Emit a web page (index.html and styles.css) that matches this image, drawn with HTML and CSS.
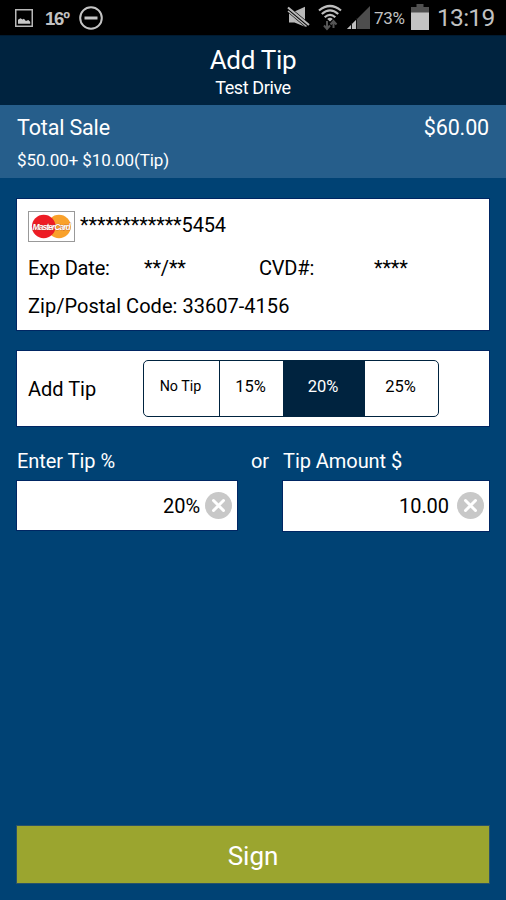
FILE: index.html
```html
<!DOCTYPE html>
<html lang="en">
<head>
<meta charset="utf-8">
<title>Add Tip</title>
<link rel="stylesheet" href="styles.css">
</head>
<body>
<div class="status">
  <svg class="status-picture" width="18" height="18" viewBox="0 0 18 18"><rect x=".75" y=".75" width="16.5" height="16.5" fill="none" stroke="#b8b8b8" stroke-width="1.5"/><path d="M3 14.800v-4l2.500-1.500 2 1.300 1.400-.8 2 2.300 2.400-1 1.900 1.700v2z" fill="#c8c8c8"/></svg>
  <span class="status-temp">16º</span>
  <svg class="status-block" width="24" height="24" viewBox="0 0 24 24"><circle cx="12" cy="12" r="10.8" fill="none" stroke="#c4c4c4" stroke-width="2"/><path d="M5.5 12h13" stroke="#c4c4c4" stroke-width="3"/></svg>
  <svg class="status-mute" width="24" height="22" viewBox="0 0 24 22"><path d="M2 5.500h5.500L18 .8v20L7.500 16.500H2z" fill="#b8b8b8"/><path d="M0 2.200l22 18.500" stroke="#000" stroke-width="5.500"/><path d="M1 1.500l21 17.500" stroke="#b8b8b8" stroke-width="2.200"/><path d="M1 5l18.500 15.500" stroke="#b8b8b8" stroke-width="1.500"/></svg>
  <svg class="status-wifi" width="24" height="27" viewBox="0 0 24 27"><g fill="none" stroke="#bdbdbd" stroke-width="2.200"><path d="M1 6.500Q12-2.500 23 6.500M3.800 10Q12 2.800 20.200 10M6.700 13.300Q12 8.300 17.300 13.300"/></g><path d="M9.200 15Q12 12.500 14.800 15L12 17.500z" fill="#bdbdbd"/><path d="M9 17v8M6 21.500L9 25l3-3.500M15.500 24v-7M12.500 20.500l3-3.500 3 3.500" fill="none" stroke="#555" stroke-width="2"/></svg>
  <svg class="status-signal" width="23" height="23" viewBox="0 0 23 23"><path d="M0 23L23 0v23z" fill="#4d4d4d"/><path d="M0 23l9-9v9z" fill="#bdbdbd"/><path d="M4.500 17v6M9.500 12v11" stroke="#111" stroke-width="1"/></svg>
  <span class="status-percent">73%</span>
  <svg class="status-battery" width="18" height="26" viewBox="0 0 18 26"><path d="M5.500 0h7v3H18v6H0V3h5.500z" fill="#505050"/><path d="M0 8.500h18V26H0z" fill="#c4c4c4"/></svg>
  <span class="status-clock">13:19</span>
</div>
<header class="header">
  <h1 class="title"><span>Add Tip</span></h1>
  <p class="subtitle"><span>Test Drive</span></p>
</header>
<section class="total">
  <div class="total-row"><span class="total-label">Total Sale</span><span class="total-value">$60.00</span></div>
  <p class="total-detail"><span>$50.00+ $10.00(Tip)</span></p>
</section>
<main class="content">
  <section class="panel card">
    <div class="card-number">
      <svg class="card-logo" width="47" height="31" viewBox="0 0 47 31"><rect x=".5" y=".5" width="46" height="30" fill="#fff" stroke="#999"/><circle cx="31" cy="15.500" r="11.800" fill="#f9a12b"/><circle cx="15.700" cy="15.500" r="11.800" fill="#ed1c24"/><text x="4.500" y="18.500" class="logo-text">MasterCard</text></svg>
      <span class="digits">************5454</span>
    </div>
    <div class="card-details"><span>Exp Date:</span><span>**/**</span><span>CVD#:</span><span>****</span></div>
    <div class="zip"><span>Zip/Postal Code: 33607-4156</span></div>
  </section>
  <section class="panel tip">
    <span class="tip-label">Add Tip</span>
    <div class="segments"><span class="segment small">No Tip</span><span class="segment">15%</span><span class="segment active">20%</span><span class="segment">25%</span></div>
  </section>
  <section class="entry">
    <span>Enter Tip %</span><span>or</span><span>Tip Amount $</span>
    <div class="field percent"><span>20%</span><svg width="27" height="27" viewBox="0 0 27 27"><circle cx="13.500" cy="13.500" r="13.500" fill="#c8c8c8"/><path d="M8.500 8.500l10 10M18.500 8.500l-10 10" stroke="#fff" stroke-width="3" stroke-linecap="round"/></svg></div>
    <div class="field amount"><span>10.00</span><svg width="27" height="27" viewBox="0 0 27 27"><circle cx="13.500" cy="13.500" r="13.500" fill="#c8c8c8"/><path d="M8.500 8.500l10 10M18.500 8.500l-10 10" stroke="#fff" stroke-width="3" stroke-linecap="round"/></svg></div>
  </section>
  <button class="sign"><span>Sign</span></button>
</main>
</body>
</html>
```
FILE: styles.css
```css
* { box-sizing: border-box; margin: 0; padding: 0; }
body { width: 506px; height: 900px; display: flex; flex-direction: column; background: #004274; color: #fff; font-family: Roboto, sans-serif; overflow: hidden; white-space: nowrap; }
svg { display: block; flex: none; }
.status { height: 36px; display: flex; align-items: flex-start; background: #000; color: #c2c2c2; border-bottom: 1px solid #001a30; flex: none; }
.status-picture { margin: 9px 0 0 15px; }
.status-temp { width: 34px; margin: 1px 0 0 12px; font: 700 18.500px/36px "Liberation Sans", sans-serif; letter-spacing: -1.200px; }
.status-block { margin-top: 6px; }
.status-mute { margin: 6px 0 0 184px; }
.status-wifi { margin: 4px 0 0 7px; }
.status-signal { margin: 6px 0 0 5px; }
.status-percent { width: 41px; padding-left: 4px; font-size: 17px; line-height: 36px; letter-spacing: -.3px; }
.status-battery { margin: 4px 0 0 0; }
.status-clock { margin-left: 8px; font-size: 24.500px; line-height: 35px; letter-spacing: -.7px; }
.header { height: 69px; padding-top: 9px; background: #00233f; text-align: center; flex: none; }
.title { font-size: 26px; font-weight: 400; line-height: 30px; letter-spacing: -.3px; }
.subtitle { margin-top: 1px; font-size: 18px; line-height: 24px; letter-spacing: -.4px; }
.total { height: 73px; padding: 8px 17px 0; background: #265e8b; flex: none; }
.total-row { display: flex; justify-content: space-between; font-size: 21.500px; line-height: 30px; letter-spacing: -.15px; }
.total-detail { margin-top: 5px; font-size: 17px; line-height: 24px; letter-spacing: -.1px; }
.content { flex: 1; display: flex; flex-direction: column; padding: 21px 17px 17px; }
.panel { background: #fff; color: #000; box-shadow: 0 0 0 1px #002663; flex: none; }
.card { height: 131px; padding: 12px 11px; font-size: 20px; }
.card-number { display: flex; height: 31px; }
.logo-text { font: italic 700 8.500px "Liberation Sans", sans-serif; letter-spacing: -.950px; fill: #fff; stroke: #a8452b; stroke-width: .5px; paint-order: stroke; }
.digits { margin-left: 5px; line-height: 29px; letter-spacing: -.15px; }
.card-details { display: grid; grid-template-columns: 116px 115px 115px auto; height: 32px; margin-top: 10px; line-height: 32px; letter-spacing: -.2px; }
.zip { margin-top: 6px; line-height: 32px; letter-spacing: .03px; }
.tip { height: 75px; margin-top: 21px; padding: 9px 0 0 11px; display: flex; font-size: 20px; }
.tip-label { width: 115px; line-height: 59px; }
.segments { display: grid; grid-template-columns: 76px 64px 81px 73px; width: 296px; height: 57px; border: 1.500px solid #00233f; border-radius: 5px; overflow: hidden; }
.segment { padding-right: 2px; border-right: 1px solid #00233f; text-align: center; font-size: 16.500px; line-height: 51px; }
.segment:last-child { border: 0; }
.small { font-size: 14.300px; }
.active { background: #00233f; color: #fff; }
.entry { display: grid; grid-template-columns: 234px 32px 206px; grid-template-rows: 29px 51px; margin-top: 26px; font-size: 20px; line-height: 18px; letter-spacing: -.05px; }
.field { height: 49px; display: flex; justify-content: flex-end; align-items: center; padding-right: 5px; background: #fff; color: #000; box-shadow: 0 0 0 1px #002663; gap: 5px; line-height: 50px; }
.percent { width: 220px; }
.amount { grid-column: 3; height: 50px; gap: 8px; padding-bottom: 1px; }
.sign { height: 57px; margin-top: auto; border: 0; background: #9ba52f; color: #fff; font-family: inherit; font-size: 26px; line-height: 60px; box-shadow: 0 0 0 1px #2a5269; flex: none; }
```
